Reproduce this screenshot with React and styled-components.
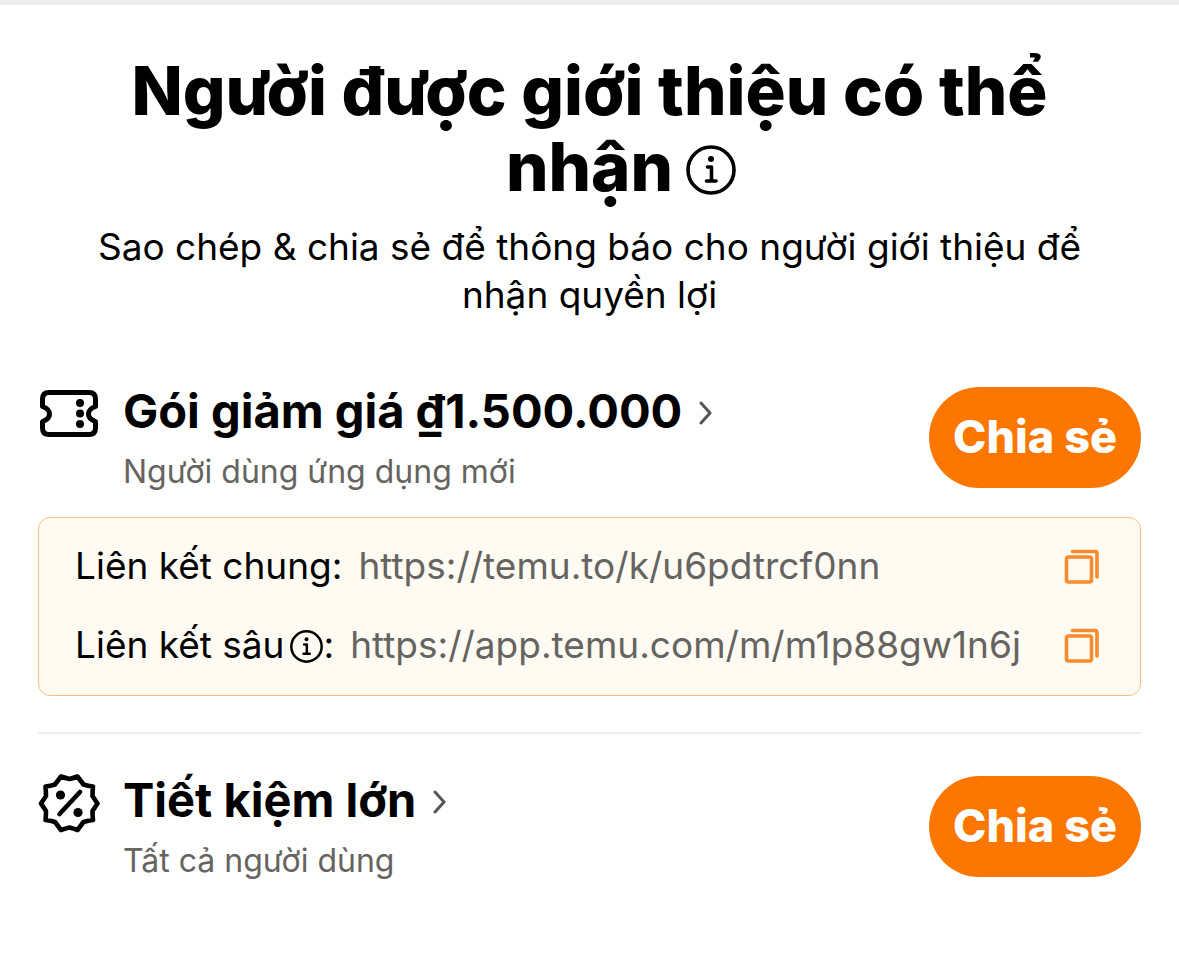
import styled, { createGlobalStyle } from 'styled-components'

const GlobalStyle = createGlobalStyle`
    * {
        box-sizing: border-box;
    }
    body {
        margin: 0;
        background: #fff;
        color: #000;
        font-family: Inter, Roboto, "Liberation Sans", sans-serif;
    }
`

const Page = styled.main`
    border-top: 5px solid #eee;
    padding: 48px 38px 80px;
`
const Header = styled.header`
    padding: 0 24px;
    margin-bottom: 64px;
    text-align: center;
`
const Title = styled.h1`
    margin: 0 0 18px;
    font-size: 67px;
    line-height: 76px;
    font-weight: 800;
`
const Subtitle = styled.p`
    margin: 0;
    font-size: 37px;
    line-height: 48px;
`
const IconButton = styled.button`
    display: inline-flex;
    padding: 0;
    border: 0;
    background: none;
    color: inherit;
    cursor: pointer;
`
/* hangs outside of the line so the heading stays centered */
const TitleInfo = styled(IconButton)`
    margin: 0 -63px 0 13px;
    vertical-align: -4px;
`
const LabelInfo = styled(IconButton)`
    margin: 0 0 0 6px;
    vertical-align: -5px;
`
const OfferRow = styled.div`
    display: flex;
    align-items: center;
`
const OfferIcon = styled.div`
    display: flex;
    align-self: flex-start;
    width: 62px;
    margin: 2px 23px 0 0;
`
const OfferText = styled.div`
    flex: 1;
`
const OfferLink = styled.a`
    display: flex;
    align-items: center;
    gap: 16px;
    color: #000;
    text-decoration: none;
`
const OfferName = styled.h2`
    margin: 0;
    font-size: 47px;
    line-height: 56px;
    font-weight: 700;
`
const OfferNote = styled.p`
    margin: 13px 0 0;
    font-size: 32px;
    line-height: 40px;
    color: #666460;
`
const ShareButton = styled.button`
    height: 101px;
    padding: 0 24px 2px;
    border: 0;
    border-radius: 51px;
    background: #fb7701;
    color: #fff;
    font-family: inherit;
    font-size: 45px;
    font-weight: 800;
    cursor: pointer;
`
const LinkBox = styled.div`
    display: flex;
    flex-direction: column;
    gap: 31px;
    margin-top: 25px;
    padding: 24px 40px 26px 36px;
    border: 1px solid #f8bf85;
    border-radius: 12px;
    background: #fffaf2;
`
const LinkRow = styled.div`
    display: flex;
    align-items: center;
    font-size: 37px;
    line-height: 48px;
`
const LinkLabel = styled.span`
    margin-right: 16px;
    white-space: nowrap;
`
const LinkUrl = styled.a`
    flex: 1;
    color: #666460;
    text-decoration: none;
`
const Divider = styled.hr`
    height: 2px;
    margin: 36px 0 38px;
    border: 0;
    background: #eee;
`

const InfoIcon = ({ size, stroke }) => (
    <svg width={size} height={size} viewBox="0 0 50 50" fill="none" stroke="currentColor">
        <circle cx="25" cy="25" r="23" strokeWidth={stroke} />
        <circle cx="25" cy="14" r="3" fill="currentColor" stroke="none" />
        <path d="M21.500 22h4v14M20.500 36h9.500" strokeWidth={stroke} strokeLinecap="round" strokeLinejoin="round" />
    </svg>
)

const TicketIcon = () => (
    <svg width="62" height="60" viewBox="0 0 62 60" fill="none" stroke="#000" strokeWidth="5">
        <path
            d="M11 7.500H51Q57.500 7.500 57.500 14V21.500Q50.500 24 50.500 29T57.500 36.500V43Q57.500 49.500 51 49.500H11Q4.500 49.500 4.500 43V36.500Q11.500 34 11.500 29T4.500 21.500V14Q4.500 7.500 11 7.500Z"
            strokeLinejoin="round"
        />
        <g fill="#000" stroke="none">
            <circle cx="42" cy="18" r="4" />
            <circle cx="42" cy="28.500" r="4" />
            <circle cx="42" cy="39" r="4" />
        </g>
    </svg>
)

const PercentIcon = () => (
    <svg width="62" height="60" viewBox="0 0 62 60" fill="none" stroke="#000" strokeWidth="4.600" strokeLinejoin="round" strokeLinecap="round">
        <path d="M31.500 5Q35.500 4 39.500 2.500L45.500 10.500Q50 12 55 12.500Q54.500 17 54.500 22L59.500 29.500L54.500 37Q54.500 42 55 46Q50 46.500 45.500 48L39.500 56Q35.500 54.500 31.500 53.500Q27.500 54.500 23 56L17 48Q12.500 46.500 7.500 46Q8 42 8 37L3 29.500L8 22Q8 17 7.500 12.500Q12.500 12 17 10.500L23 2.500Q27.500 4 31.500 5Z" />
        <path d="M21.500 40L42 18" />
        <circle cx="22.500" cy="21" r="4.600" fill="#000" stroke="none" />
        <circle cx="40" cy="38.500" r="4.600" fill="#000" stroke="none" />
    </svg>
)

const ChevronIcon = () => (
    <svg width="14" height="28" viewBox="0 0 14 28" fill="none" stroke="#555" strokeWidth="3" strokeLinecap="round" strokeLinejoin="round">
        <path d="M3 6L12 16L3 26" />
    </svg>
)

const CopyIcon = () => (
    <svg width="36" height="36" viewBox="0 0 36 36" fill="none" stroke="#f78b2d" strokeWidth="3.600" strokeLinejoin="round" strokeLinecap="round">
        <rect x="2.500" y="9" width="25" height="25" rx="2" />
        <path d="M8.500 3.500H31Q33 3.500 33 5.500V29" />
    </svg>
)

const Offer = ({ icon, name, note }) => (
    <OfferRow>
        <OfferIcon>{icon}</OfferIcon>
        <OfferText>
            <OfferLink href="#">
                <OfferName>{name}</OfferName>
                <ChevronIcon />
            </OfferLink>
            <OfferNote>{note}</OfferNote>
        </OfferText>
        <ShareButton type="button">Chia sẻ</ShareButton>
    </OfferRow>
)

const CopyLink = ({ label, url, info }) => (
    <LinkRow>
        <LinkLabel>
            {label}
            {info && (
                <LabelInfo type="button" aria-label={label}>
                    <InfoIcon size={33} stroke={3.8} />
                </LabelInfo>
            )}
            :
        </LinkLabel>
        <LinkUrl href={url}>{url}</LinkUrl>
        <IconButton type="button" aria-label="Sao chép">
            <CopyIcon />
        </IconButton>
    </LinkRow>
)

const App = () => {
    return (
        <>
            <GlobalStyle />
            <Page>
                <Header>
                    <Title>
                        Người được giới thiệu có thể nhận
                        <TitleInfo type="button" aria-label="Thông tin">
                            <InfoIcon size={50} stroke={3.6} />
                        </TitleInfo>
                    </Title>
                    <Subtitle>Sao chép &amp; chia sẻ để thông báo cho người giới thiệu để nhận quyền lợi</Subtitle>
                </Header>
                <Offer icon={<TicketIcon />} name="Gói giảm giá ₫1.500.000" note="Người dùng ứng dụng mới" />
                <LinkBox>
                    <CopyLink label="Liên kết chung" url="https://temu.to/k/u6pdtrcf0nn" />
                    <CopyLink label="Liên kết sâu" url="https://app.temu.com/m/m1p88gw1n6j" info />
                </LinkBox>
                <Divider />
                <Offer icon={<PercentIcon />} name="Tiết kiệm lớn" note="Tất cả người dùng" />
            </Page>
        </>
    )
}

export default App
